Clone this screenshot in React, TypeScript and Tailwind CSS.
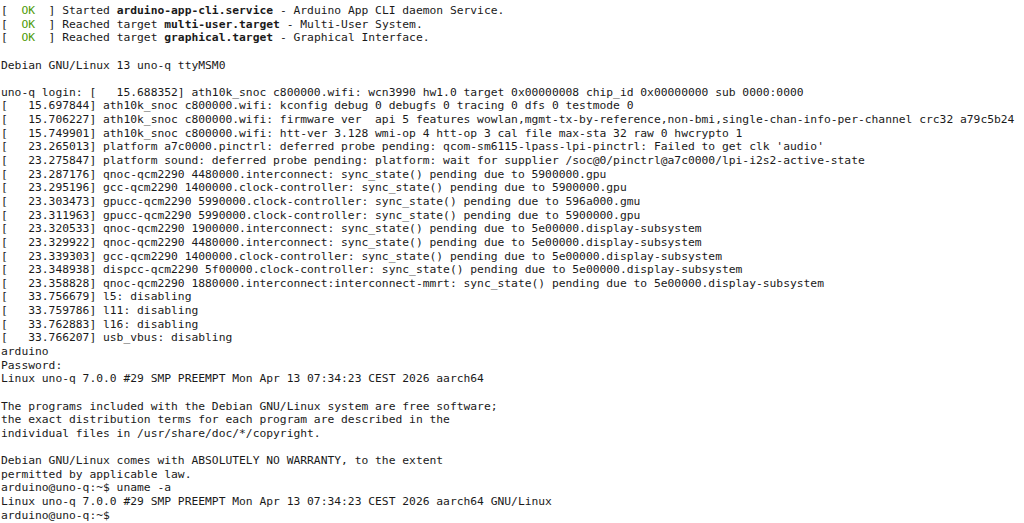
import React from "react";

type Seg = { t: string; b?: boolean; ok?: boolean };

const okLine = (pre: string, bold: string, post: string): Seg[] => [
  { t: "[  " },
  { t: "OK", ok: true },
  { t: "  ] " + pre },
  { t: bold, b: true },
  { t: post },
];

const lines: (string | Seg[])[] = [
  okLine("Started ", "arduino-app-cli.service", " - Arduino App CLI daemon Service."),
  okLine("Reached target ", "multi-user.target", " - Multi-User System."),
  okLine("Reached target ", "graphical.target", " - Graphical Interface."),
  "",
  "Debian GNU/Linux 13 uno-q ttyMSM0",
  "",
  "uno-q login: [   15.688352] ath10k_snoc c800000.wifi: wcn3990 hw1.0 target 0x00000008 chip_id 0x00000000 sub 0000:0000",
  "[   15.697844] ath10k_snoc c800000.wifi: kconfig debug 0 debugfs 0 tracing 0 dfs 0 testmode 0",
  "[   15.706227] ath10k_snoc c800000.wifi: firmware ver  api 5 features wowlan,mgmt-tx-by-reference,non-bmi,single-chan-info-per-channel crc32 a79c5b24",
  "[   15.749901] ath10k_snoc c800000.wifi: htt-ver 3.128 wmi-op 4 htt-op 3 cal file max-sta 32 raw 0 hwcrypto 1",
  "[   23.265013] platform a7c0000.pinctrl: deferred probe pending: qcom-sm6115-lpass-lpi-pinctrl: Failed to get clk 'audio'",
  "[   23.275847] platform sound: deferred probe pending: platform: wait for supplier /soc@0/pinctrl@a7c0000/lpi-i2s2-active-state",
  "[   23.287176] qnoc-qcm2290 4480000.interconnect: sync_state() pending due to 5900000.gpu",
  "[   23.295196] gcc-qcm2290 1400000.clock-controller: sync_state() pending due to 5900000.gpu",
  "[   23.303473] gpucc-qcm2290 5990000.clock-controller: sync_state() pending due to 596a000.gmu",
  "[   23.311963] gpucc-qcm2290 5990000.clock-controller: sync_state() pending due to 5900000.gpu",
  "[   23.320533] qnoc-qcm2290 1900000.interconnect: sync_state() pending due to 5e00000.display-subsystem",
  "[   23.329922] qnoc-qcm2290 4480000.interconnect: sync_state() pending due to 5e00000.display-subsystem",
  "[   23.339303] gcc-qcm2290 1400000.clock-controller: sync_state() pending due to 5e00000.display-subsystem",
  "[   23.348938] dispcc-qcm2290 5f00000.clock-controller: sync_state() pending due to 5e00000.display-subsystem",
  "[   23.358828] qnoc-qcm2290 1880000.interconnect:interconnect-mmrt: sync_state() pending due to 5e00000.display-subsystem",
  "[   33.756679] l5: disabling",
  "[   33.759786] l11: disabling",
  "[   33.762883] l16: disabling",
  "[   33.766207] usb_vbus: disabling",
  "arduino",
  "Password:",
  "Linux uno-q 7.0.0 #29 SMP PREEMPT Mon Apr 13 07:34:23 CEST 2026 aarch64",
  "",
  "The programs included with the Debian GNU/Linux system are free software;",
  "the exact distribution terms for each program are described in the",
  "individual files in /usr/share/doc/*/copyright.",
  "",
  "Debian GNU/Linux comes with ABSOLUTELY NO WARRANTY, to the extent",
  "permitted by applicable law.",
  "arduino@uno-q:~$ uname -a",
  "Linux uno-q 7.0.0 #29 SMP PREEMPT Mon Apr 13 07:34:23 CEST 2026 aarch64 GNU/Linux",
  "arduino@uno-q:~$",
];

export default function App() {
  return (
    <div className="w-[1024px] h-[523px] overflow-hidden bg-white">
      <pre className="pt-[4px] pl-[1px] m-0 font-['DejaVu_Sans_Mono',monospace] text-[11.3px] leading-[13.65px] text-[#1a1a1a] whitespace-pre">
        {lines.map((l, i) => (
          <div key={i} className="h-[13.65px]">
            {typeof l === "string"
              ? l
              : l.map((s, j) => (
                  <span
                    key={j}
                    className={
                      s.ok ? "text-[#4e9a06]" : s.b ? "font-bold" : undefined
                    }
                  >
                    {s.t}
                  </span>
                ))}
          </div>
        ))}
      </pre>
    </div>
  );
}
